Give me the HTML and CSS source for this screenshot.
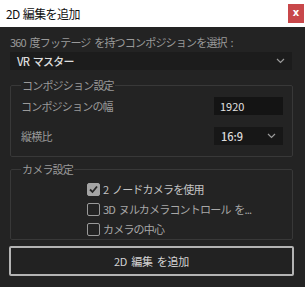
FILE: index.html
```html
<!DOCTYPE html>
<html lang="ja">
<head>
    <meta charset="UTF-8">
    <title>2D 編集を追加</title>
    <link rel="stylesheet" href="styles.css">
</head>
<body>
    <div class="titlebar">
        <span class="title">2D 編集を追加</span>
        <div class="close">x</div>
    </div>

    <div class="content">
        <div class="label">360 度フッテージ を持つコンポジションを選択 :</div>
        <div class="select wide">
            <span class="select-text">VR マスター</span>
            <svg class="chevron" width="9" height="6" viewBox="0 0 9 6"><polyline points="1,1 4.5,4.5 8,1" fill="none" stroke="#9a9a9a" stroke-width="1.2"/></svg>
        </div>

        <fieldset class="group">
            <legend>コンポジション設定</legend>
            <div class="row">
                <span>コンポジションの幅</span>
                <div class="input">1920</div>
            </div>
            <div class="row">
                <span>縦横比</span>
                <div class="select small">
                    <span class="select-text">16:9</span>
                    <svg class="chevron" width="9" height="6" viewBox="0 0 9 6"><polyline points="1,1 4.5,4.5 8,1" fill="none" stroke="#9a9a9a" stroke-width="1.2"/></svg>
                </div>
            </div>
        </fieldset>

        <fieldset class="group camera">
            <legend>カメラ設定</legend>
            <div class="check on">
                <span class="box">
                    <svg width="11" height="11" viewBox="0 0 11 11"><polyline points="2,5.5 4.5,8 9,2.5" fill="none" stroke="#262626" stroke-width="1.8"/></svg>
                </span>
                <span>2 ノードカメラを使用</span>
            </div>
            <div class="check">
                <span class="box"></span>
                <span>3D ヌルカメラコントロール を...</span>
            </div>
            <div class="check">
                <span class="box"></span>
                <span>カメラの中心</span>
            </div>
        </fieldset>

        <div class="button">2D 編集 を追加</div>
    </div>
</body>
</html>
```

FILE: styles.css
```css
body, html {
    margin: 0;
    width: 305px;
    height: 287px;
    background: #232323;
    font-family: "Noto Sans CJK JP", "Noto Sans", sans-serif;
    font-size: 11px;
    letter-spacing: -0.8px;
    word-spacing: 2px;
    color: #9a9a9a;
    overflow: hidden;
}

.titlebar {
    height: 27px;
    background: #ffffff;
    display: flex;
    justify-content: space-between;
    align-items: flex-start;
    padding-left: 6px;
}

.title {
    font-size: 12px;
    letter-spacing: -0.6px;
    word-spacing: 1px;
    color: #111;
    line-height: 27px;
}

.close {
    width: 16px;
    height: 19px;
    margin-top: 4px;
    margin-right: 1px;
    background: #c8474a;
    color: #fff;
    font-family: "DejaVu Sans", sans-serif;
    font-weight: bold;
    font-size: 10px;
    letter-spacing: 0;
    line-height: 18px;
    text-align: center;
}

.content {
    padding: 6px 12px 0 10px;
}

.label {
    line-height: 18px;
}

.select {
    display: flex;
    align-items: center;
    justify-content: space-between;
    background: #1c1c1c;
    box-sizing: border-box;
    height: 18px;
    padding: 0 7px 0 7px;
}

.select.wide {
    margin-top: 1px;
    margin-right: 1px;
}

.select-text {
    color: #dcdcdc;
    font-weight: 500;
}

.select.small {
    width: 69px;
    background: #171717;
    letter-spacing: 0;
}

.group {
    margin: 7px 0 0;
    padding: 4px 9px 11px 10px;
    border: 1px solid #383838;
    border-radius: 2px;
}

.group legend {
    padding: 0 1px;
    line-height: 16px;
    color: #9a9a9a;
}

.row {
    display: flex;
    justify-content: space-between;
    align-items: center;
    height: 18px;
}

.row + .row {
    margin-top: 12px;
}

.input {
    width: 69px;
    height: 18px;
    box-sizing: border-box;
    background: #141414;
    color: #e0e0e0;
    letter-spacing: 0;
    padding-left: 6px;
    line-height: 18px;
}

.camera {
    margin-top: 4px;
    padding: 2px 9px 0 10px;
}

.check {
    display: flex;
    align-items: center;
    height: 20px;
    gap: 3px;
    margin-left: 66px;
    color: #a8a8a8;
}

.check.on {
    color: #c4c4c4;
}

.box {
    width: 13px;
    height: 13px;
    box-sizing: border-box;
    border: 1.5px solid #9a9a9a;
    border-radius: 2px;
    display: flex;
    align-items: center;
    justify-content: center;
}

.check.on .box {
    background: #a4a4a4;
    border-color: #a4a4a4;
}

.button {
    margin: 6px 0 0 -1px;
    width: 285px;
    height: 30px;
    box-sizing: border-box;
    border: 2px solid #b4b4b4;
    border-radius: 2px;
    background: #222;
    color: #d4d4d4;
    letter-spacing: -0.3px;
    text-align: center;
    line-height: 26px;
}
```
